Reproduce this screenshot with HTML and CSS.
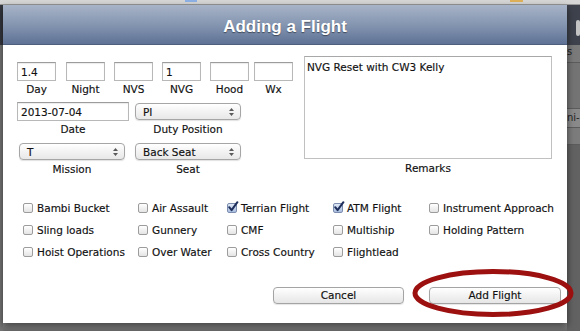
FILE: index.html
```html
<!DOCTYPE html>
<html>
<head>
<meta charset="utf-8">
<title>Adding a Flight</title>
<link rel="stylesheet" href="styles.css">
</head>
<body>
<div class="toolbar"><span class="tb-blue"></span><span class="tb-gold"></span></div>
<div class="stage">
  <div class="bg-left"><div class="bg-head"></div><div class="bg-rows"></div></div>
  <div class="center">
    <div class="dialog">
      <div class="titlebar">Adding a Flight</div>
      <div class="content">
        <div class="top">
          <div class="fields">
            <div class="row hours">
              <div class="field"><input class="text small" value="1.4"><label>Day</label></div>
              <div class="field f-night"><input class="text small" value=""><label>Night</label></div>
              <div class="field"><input class="text small" value=""><label>NVS</label></div>
              <div class="field"><input class="text small" value="1"><label>NVG</label></div>
              <div class="field"><input class="text small" value=""><label>Hood</label></div>
              <div class="field f-wx"><input class="text small" value=""><label>Wx</label></div>
            </div>
            <div class="row row2">
              <div class="field"><div class="ctrl"><input class="text date" value="2013-07-04"></div><label>Date</label></div>
              <div class="field"><div class="ctrl"><div class="select"><span>PI</span><svg class="arrows" width="5" height="8" viewBox="0 0 5 8"><path d="M0 3 L2.5 0 L5 3Z M0 5 L2.5 8 L5 5Z"/></svg></div></div><label>Duty Position</label></div>
            </div>
            <div class="row row3">
              <div class="field f-mission"><div class="ctrl"><div class="select"><span>T</span><svg class="arrows" width="5" height="8" viewBox="0 0 5 8"><path d="M0 3 L2.5 0 L5 3Z M0 5 L2.5 8 L5 5Z"/></svg></div></div><label>Mission</label></div>
              <div class="field"><div class="ctrl"><div class="select"><span>Back Seat</span><svg class="arrows" width="5" height="8" viewBox="0 0 5 8"><path d="M0 3 L2.5 0 L5 3Z M0 5 L2.5 8 L5 5Z"/></svg></div></div><label>Seat</label></div>
            </div>
          </div>
          <div class="remarks">
            <textarea class="remarks-box">NVG Reset with CW3 Kelly</textarea>
            <label>Remarks</label>
          </div>
        </div>
        <div class="checks">
          <label class="check"><span class="box"></span>Bambi Bucket</label>
          <label class="check"><span class="box"></span>Air Assault</label>
          <label class="check"><span class="box on"><svg class="tick" width="12" height="12" viewBox="0 0 12 12"><path d="M2.2 6.2 L4.6 9.2 L10.4 1.2" /></svg></span>Terrian Flight</label>
          <label class="check"><span class="box on"><svg class="tick" width="12" height="12" viewBox="0 0 12 12"><path d="M2.2 6.2 L4.6 9.2 L10.4 1.2" /></svg></span>ATM Flight</label>
          <label class="check"><span class="box"></span>Instrument Approach</label>

          <label class="check"><span class="box"></span>Sling loads</label>
          <label class="check"><span class="box"></span>Gunnery</label>
          <label class="check"><span class="box"></span>CMF</label>
          <label class="check"><span class="box"></span>Multiship</label>
          <label class="check"><span class="box"></span>Holding Pattern</label>

          <label class="check"><span class="box"></span>Hoist Operations</label>
          <label class="check"><span class="box"></span>Over Water</label>
          <label class="check"><span class="box"></span>Cross Country</label>
          <label class="check"><span class="box"></span>Flightlead</label>
        </div>
        <div class="buttons">
          <button class="btn cancel">Cancel</button>
          <button class="btn add">Add Flight</button>
        </div>
      </div>
    </div>
    <div class="bg-bottom"></div>
  </div>
  <div class="bg-right">
    <div class="bg-head-r"><span class="bg-btn"></span></div>
    <div class="bg-r1">s</div>
    <div class="bg-r2"></div>
    <div class="bg-r3">ni-</div>
    <div class="bg-r4"></div>
    <div class="bg-r5"></div>
  </div>
</div>
<svg class="annotation" width="170" height="56" viewBox="0 0 170 56"><ellipse cx="84" cy="28" rx="78" ry="21.5" /></svg>
</body>
</html>
```
FILE: styles.css
```css
html, body {
  margin: 0;
  padding: 0;
}
body {
  width: 580px;
  height: 331px;
  overflow: hidden;
  background: #6b6b6b;
  font-family: "DejaVu Sans", "Noto Sans", sans-serif;
  font-size: 10.5px;
  color: #111;
  position: relative;
}
.toolbar {
  height: 4px;
  background: #d6d6d6;
  border-bottom: 1px solid #9a9a9a;
  display: flex;
}
.tb-blue {
  margin-left: 185px;
  width: 12px;
  height: 2px;
  background: #8db0e6;
}
.tb-gold {
  margin-left: 313px;
  width: 13px;
  height: 2px;
  background: #e0b15a;
}
.stage {
  display: flex;
  height: 326px;
}
.bg-left {
  width: 3px;
  display: flex;
  flex-direction: column;
}
.bg-head {
  height: 40px;
  background: #34373e;
}
.bg-rows {
  flex: 1;
  background: #757575;
}
.center {
  width: 564px;
  display: flex;
  flex-direction: column;
}
.dialog {
  height: 318px;
  background: #fff;
  display: flex;
  flex-direction: column;
  box-shadow: 0 3px 7px rgba(0, 0, 0, 0.55);
  position: relative;
  z-index: 1;
}
.titlebar {
  height: 40px;
  box-sizing: border-box;
  padding-top: 4px;
  line-height: 36px;
  background: linear-gradient(#a7b3c7, #8596b1 50%, #5f7295);
  border-bottom: 1px solid #4e5f7e;
  color: #fff;
  font-family: "Liberation Sans", Arial, sans-serif;
  font-weight: bold;
  font-size: 17px;
  text-align: center;
  text-shadow: 0 1px 1px rgba(0, 0, 0, 0.45);
}
.content {
  flex: 1;
  padding: 11px 0 0 14px;
  -webkit-text-stroke: 0.15px #111;
}
.top {
  display: flex;
}
.fields {
  width: 287px;
  padding-top: 6px;
  box-sizing: border-box;
}
.row {
  display: flex;
}
.hours {
  gap: 9px;
}
.f-night {
  margin-left: 1px;
}
.f-wx {
  margin-left: -4px;
}
.f-wx label {
  text-align: left;
}
.field {
  display: flex;
  flex-direction: column;
}
.field label,
.remarks label {
  text-align: center;
  line-height: 13px;
  margin-top: 2px;
  white-space: nowrap;
}
input.text {
  box-sizing: border-box;
  height: 19px;
  margin: 0;
  border: 1px solid #b8b8b8;
  border-top-color: #9c9c9c;
  padding: 0 3px;
  font: inherit;
  color: #111;
  background: #fff;
  box-shadow: inset 0 1px 1px rgba(0, 0, 0, 0.08);
  outline: none;
}
.small {
  width: 39px;
}
.date {
  width: 112px;
}
.row2 {
  margin-top: 6px;
  gap: 6px;
}
.row3 {
  margin-top: 6px;
  gap: 10px;
}
.f-mission {
  margin-left: 2px;
}
.ctrl {
  height: 19px;
  display: flex;
  align-items: center;
}
.select {
  box-sizing: border-box;
  width: 106px;
  height: 17px;
  border: 1px solid #a6a6a6;
  border-radius: 4px;
  background: linear-gradient(#ffffff, #f3f3f3 50%, #e8e8e8);
  box-shadow: 0 1px 1px rgba(0, 0, 0, 0.12);
  display: flex;
  align-items: center;
  justify-content: space-between;
  padding: 0 6px 0 7px;
}
.arrows {
  fill: #5a5a5a;
}
.remarks {
  display: flex;
  flex-direction: column;
  width: 248px;
}
.remarks label {
  margin-top: 3px;
}
.remarks-box {
  box-sizing: border-box;
  width: 248px;
  height: 103px;
  margin: 0;
  border: 1px solid #c0c0c0;
  border-top-color: #a8a8a8;
  padding: 4px 2px;
  font: inherit;
  color: #111;
  resize: none;
  outline: none;
  overflow: hidden;
}
.checks {
  display: grid;
  grid-template-columns: 115px 89px 106px 96px auto;
  grid-auto-rows: 22px;
  margin-top: 21px;
  margin-left: 6px;
}
.check {
  display: flex;
  align-items: center;
  white-space: nowrap;
}
.box {
  box-sizing: border-box;
  width: 10px;
  height: 10px;
  flex: none;
  margin-right: 4px;
  border: 1px solid #9c9c9c;
  border-radius: 2px;
  background: linear-gradient(#ffffff, #e4e4e4);
  position: relative;
}
.box.on {
  background: linear-gradient(#dfe8f6, #a9bedf);
  border-color: #7d8db0;
}
.tick {
  position: absolute;
  left: -1px;
  top: -3px;
  fill: none;
  stroke: #1f2f5c;
  stroke-width: 2;
  stroke-linecap: round;
  stroke-linejoin: round;
}
.buttons {
  display: flex;
  justify-content: flex-end;
  gap: 25px;
  margin-top: 24px;
  padding-right: 6px;
}
.btn {
  box-sizing: border-box;
  height: 17px;
  margin: 0;
  padding: 0;
  border: 1px solid #a4a4a4;
  border-radius: 4px;
  background: linear-gradient(#ffffff, #f2f2f2 50%, #e6e6e6);
  box-shadow: 0 1px 1px rgba(0, 0, 0, 0.1);
  font: inherit;
  color: #111;
  line-height: 15px;
}
.cancel {
  width: 131px;
}
.add {
  width: 132px;
}
.bg-bottom {
  flex: 1;
  background: linear-gradient(#8e8e8e, #6a6a6a);
}
.bg-right {
  flex: 1;
  display: flex;
  flex-direction: column;
  font-size: 10px;
  color: #222;
  overflow: hidden;
}
.bg-head-r {
  height: 40px;
  background: #3e424c;
  display: flex;
  align-items: flex-start;
}
.bg-btn {
  margin-left: 9px;
  margin-top: 15px;
  width: 10px;
  height: 16px;
  border-radius: 3px;
  background: #c4c4c4;
}
.bg-r1 {
  height: 17px;
  background: #7a7a7a;
  line-height: 14px;
  border-bottom: 1px solid #5c5c5c;
}
.bg-r2 {
  height: 45px;
  background: #747474;
  border-bottom: 1px solid #5c5c5c;
}
.bg-r3 {
  height: 18px;
  background: #8a8a8a;
  line-height: 18px;
  border-bottom: 1px solid #5c5c5c;
}
.bg-r4 {
  height: 16px;
  background: #7c7c7c;
  border-bottom: 1px solid #5c5c5c;
}
.bg-r5 {
  flex: 1;
  background: #626262;
}
.annotation {
  position: absolute;
  left: 409px;
  top: 265px;
  z-index: 2;
  fill: none;
  stroke: #9d1010;
  stroke-width: 5;
}
```
